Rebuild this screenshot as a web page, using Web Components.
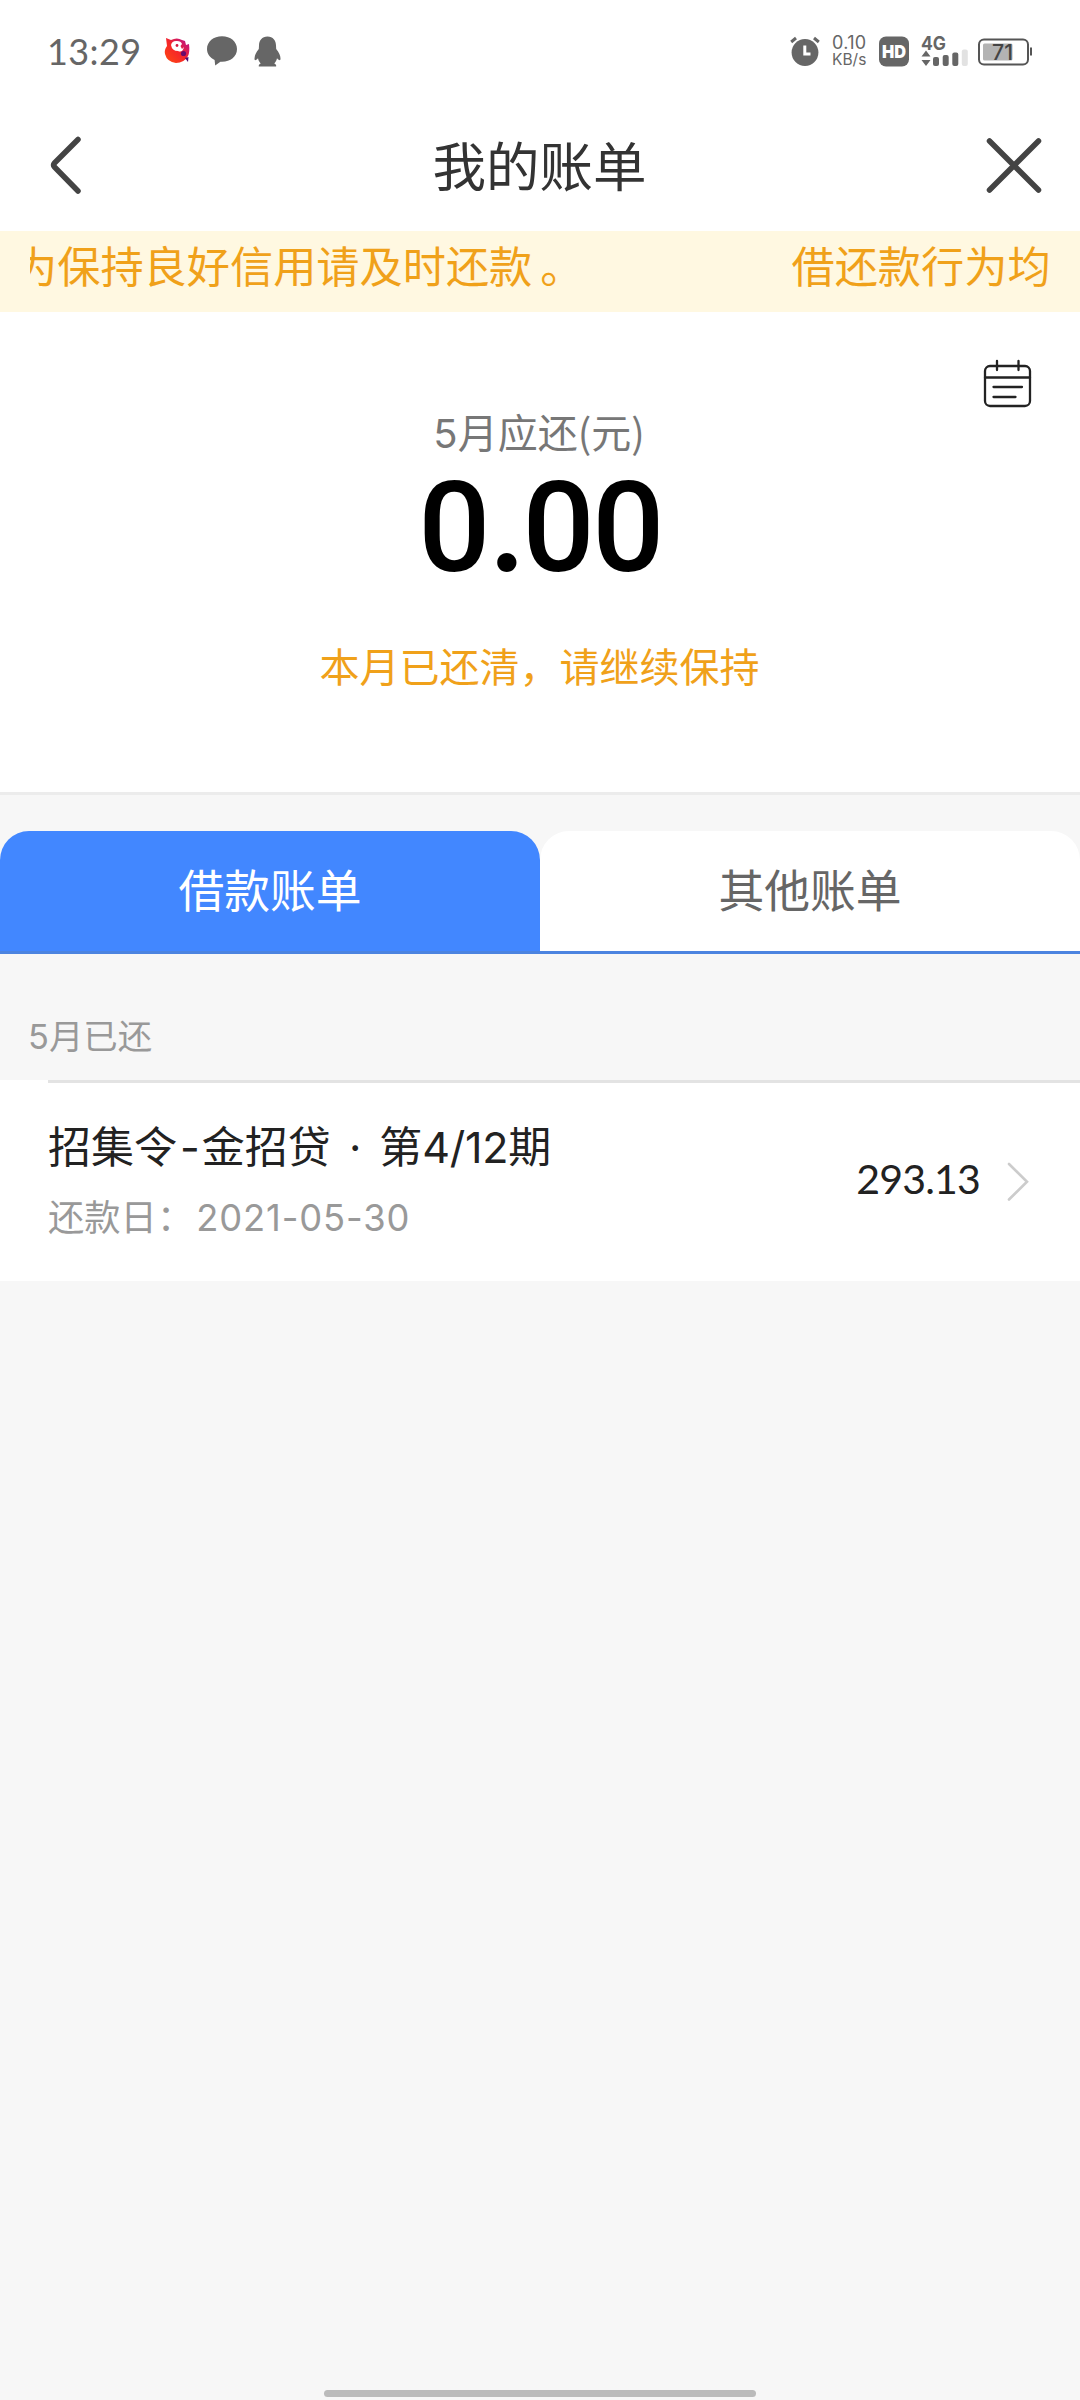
<!DOCTYPE html>
<html lang="zh-CN">
<head>
<meta charset="utf-8">
<title>我的账单</title>
<style>
    body {
        margin: 0;
        background: #f7f7f7;
        font-family: "Noto Sans CJK SC", sans-serif;
        color: #222;
    }
</style>
</head>
<body>
<bill-app></bill-app>

<script>
class StatusBar extends HTMLElement {
    connectedCallback() {
        this.attachShadow({ mode: 'open' });
        this.shadowRoot.innerHTML = `
            <style>
                :host {
                    display: flex;
                    justify-content: space-between;
                    height: 102px;
                    padding: 0 47px;
                    box-sizing: border-box;
                    color: #666;
                    font-family: Lato, sans-serif;
                }
                svg { display: block; }
                .side { display: flex; align-items: center; height: 102px; }
                .time { font-size: 36px; line-height: 40px; width: 117px; letter-spacing: 0.4px; white-space: nowrap; }
                .speed {
                    font-family: Inter, sans-serif;
                    width: 47px;
                    margin-left: 12px;
                    line-height: 17px;
                    white-space: nowrap;
                }
                .speed div:first-child { font-size: 18px; letter-spacing: 0.3px; }
                .speed div:last-child { font-size: 15.5px; }
                text { font-family: Inter, sans-serif; fill: #666; }
            </style>
            <div class="side">
                <span class="time">13:29</span>
                <svg width="27" height="28" viewBox="0 0 27 28">
                    <defs>
                        <linearGradient id="bird" x1="0" y1="1" x2="1" y2="0">
                            <stop offset="0" stop-color="#ff4a10"/>
                            <stop offset="0.5" stop-color="#f5262a"/>
                            <stop offset="1" stop-color="#b0109a"/>
                        </linearGradient>
                    </defs>
                    <path d="M2 1 L7 3 Q13 0 18 3 L21 4 L22 8 L25 7 Q26 15 24 19 Q20 26 12 26 Q3 25 1 17 Q0 13 3 9Z" fill="url(#bird)"/>
                    <path d="M7 8 Q8 3.500 13 4 Q17 4 18 7 L16.500 9 L18 12 L20 10 Q18.500 16 14 14 Q8 14 7 8Z" fill="#fff"/>
                    <circle cx="13" cy="8.500" r="1.400" fill="#d51a40"/>
                    <circle cx="19.500" cy="16.500" r="2.600" fill="#6b0a6b"/>
                    <path d="M21 21 L24.500 20 L24 25Z" fill="#500a70"/>
                </svg>
                <svg width="30" height="30" viewBox="0 0 30 30" style="margin-left:16px">
                    <path d="M15 0.3 C23.5 0.3 30 5.7 30 13 C30 20.5 23.5 25.8 15 25.8 L13.4 25.7 L8.2 29.6 L7.6 24 C3 21.8 0 17.8 0 13 C0 5.7 6.500 0.3 15 0.3Z" fill="#666"/>
                </svg>
                <svg width="27" height="31" viewBox="0 0 27 31" style="margin-left:17px">
                    <path d="M13.500 0.5 C8 0.5 5 4.5 5 9.500 L4.800 13 C2 16.500 0.500 19.500 0.500 22.500 C0.500 24.800 1.400 24.800 4 22.200 C4.500 24.500 5.500 26.300 6.800 27.400 C4.700 28 4.300 30.500 5.200 30.500 L21.800 30.500 C22.700 30.500 22.300 28 20.200 27.400 C21.500 26.300 22.500 24.500 23 22.200 C25.600 24.800 26.500 24.800 26.500 22.500 C26.500 19.500 25 16.500 22.200 13 L22 9.500 C22 4.500 19 0.5 13.500 0.5Z" fill="#666"/>
                </svg>
            </div>
            <div class="side">
                <svg width="30" height="30" viewBox="0 0 30 30">
                    <circle cx="15" cy="16.500" r="13.400" fill="#666"/>
                    <path d="M1.200 6 L6 2 M28.800 6 L24 2" stroke="#666" stroke-width="3" fill="none"/>
                    <path d="M14.800 9.500 V18 H20.500" stroke="#fff" stroke-width="3" fill="none"/>
                </svg>
                <div class="speed"><div>0.10</div><div>KB/s</div></div>
                <svg width="31" height="31" viewBox="0 0 31 31">
                    <rect x="0" y="0.500" width="30" height="30" rx="7" fill="#666"/>
                    <text x="3" y="22" font-size="18" font-weight="900" textLength="24" lengthAdjust="spacingAndGlyphs" style="fill:#fff">HD</text>
                </svg>
                <svg width="48" height="38" viewBox="0 -6 48 38" style="margin:-6px 0 0 11px">
                    <text x="0" y="14.500" font-size="18.500" font-weight="700" textLength="25" lengthAdjust="spacingAndGlyphs">4G</text>
                    <path d="M0.500 21.500 L5 15.500 L9.500 21.500Z M0.500 25 L5 31 L9.500 25Z" fill="#666"/>
                    <rect x="12" y="22" width="6" height="9" rx="2" fill="#666"/>
                    <rect x="21.700" y="20" width="6" height="11" rx="2" fill="#666"/>
                    <rect x="31.300" y="17.500" width="6" height="13.500" rx="2" fill="#666"/>
                    <rect x="40.800" y="14.500" width="6" height="16.500" rx="2" fill="#e2e2e2"/>
                </svg>
                <svg width="55" height="28" viewBox="0 0 55 28" style="margin:2px 0 0 9px">
                    <rect x="1" y="1.500" width="49" height="25" rx="5" fill="#fff" stroke="#555" stroke-width="2"/>
                    <rect x="5" y="5.500" width="29.500" height="17" rx="1.500" fill="#b3b3b3"/>
                    <rect x="52" y="9.500" width="2" height="8" fill="#555"/>
                    <text x="14" y="21.800" font-size="21" font-weight="500" textLength="21" lengthAdjust="spacingAndGlyphs" style="fill:#444">71</text>
                </svg>
            </div>
`;
    }
}

class NavHeader extends HTMLElement {
    connectedCallback() {
        this.attachShadow({ mode: 'open' });
        this.shadowRoot.innerHTML = `
            <style>
                :host {
                    display: flex;
                    align-items: center;
                    justify-content: space-between;
                    height: 129px;
                    padding: 0 36px 2px 47px;
                    box-sizing: border-box;
                }
                svg { display: block; fill: none; stroke: #444; stroke-width: 5.500; stroke-linecap: round; stroke-linejoin: round; }
                .title { font-size: 53.500px; line-height: 70px; color: #333; padding: 0 9px 3px 0; }
            </style>
            <svg width="57" height="60" viewBox="0 0 57 60"><path d="M31 3.500 L7.500 27 Q5.500 29 7.500 31 L31 55"/></svg>
            <div class="title"><slot></slot></div>
            <svg width="60" height="60" viewBox="0 0 60 60"><path d="M5.500 5 L54.500 54 M54.500 5 L5.500 54"/></svg>
`;
    }
}

class NoticeBar extends HTMLElement {
    connectedCallback() {
        this.attachShadow({ mode: 'open' });
        this.shadowRoot.innerHTML = `
            <style>
                :host {
                    display: block;
                    height: 81px;
                    padding: 0 30px;
                    box-sizing: border-box;
                    background: #fff8e1;
                }
                .track {
                    display: flex;
                    gap: 216px;
                    overflow: hidden;
                    font-size: 43.200px;
                    line-height: 67px;
                    color: #f0a11a;
                    white-space: nowrap;
                }
                /* the text has scrolled part of a character out on the left */
                ::slotted(span:first-child) { margin-left: -16px; }
            </style>
            <div class="track"><slot></slot></div>
`;
    }
}

class BillSummary extends HTMLElement {
    connectedCallback() {
        this.attachShadow({ mode: 'open' });
        this.shadowRoot.innerHTML = `
            <style>
                :host {
                    display: flex;
                    flex-direction: column;
                    align-items: center;
                    height: 483px;
                    box-sizing: border-box;
                    border-bottom: 3px solid #ececec;
                    background: #fff;
                }
                .calendar { align-self: flex-end; margin: 47px 48px 0 0; display: block; }
                .label { font-size: 40px; line-height: 50px; margin: -3px 2px 0 0; color: #777; }
                .amount {
                    font-family: Roboto, sans-serif;
                    font-weight: 500;
                    font-size: 127px;
                    line-height: 130px;
                    letter-spacing: -2.500px;
                    color: #000;
                    margin-top: -2px;
                }
                .dot { font-family: Lato, sans-serif; font-weight: 700; padding: 0 3px 0 4px; }
                .tip { font-size: 40px; line-height: 50px; margin: 47px 1px 0 0; color: #f0a11a; }
            </style>
            <svg class="calendar" width="49" height="50" viewBox="0 0 49 50" fill="none" stroke="#222" stroke-width="2.300" stroke-linecap="round">
                <rect x="2" y="7" width="45" height="40" rx="5"/>
                <path d="M2 18.500 H47 M14 2 V11 M35.500 2 V11 M10.500 28 H39 M10.500 38 H32.500"/>
            </svg>
            <div class="label"><slot name="label"></slot></div>
            <div class="amount">0<span class="dot">.</span>00</div>
            <div class="tip"><slot name="tip"></slot></div>
`;
    }
}

class BillTabs extends HTMLElement {
    connectedCallback() {
        this.attachShadow({ mode: 'open' });
        this.shadowRoot.innerHTML = `
            <style>
                :host {
                    display: grid;
                    grid-template-columns: 1fr 1fr;
                    height: 123px;
                    margin-top: 36px;
                }
                ::slotted(span) {
                    box-sizing: border-box;
                    height: 123px;
                    border-bottom: 3px solid #4c84e0;
                    border-radius: 29px 29px 0 0;
                    background: #fff;
                    color: #666;
                    font-size: 45.800px;
                    line-height: 114px;
                    text-align: center;
                }
                ::slotted(.active) {
                    background: #4287ff;
                    color: #fff;
                }
            </style>
            <slot></slot>
`;
    }
}

class BillItem extends HTMLElement {
    connectedCallback() {
        this.attachShadow({ mode: 'open' });
        this.shadowRoot.innerHTML = `
            <style>
                :host {
                    display: block;
                    height: 201px;
                    padding-left: 48px;
                    box-sizing: border-box;
                    background: #fff;
                }
                .row {
                    display: flex;
                    align-items: center;
                    justify-content: space-between;
                    height: 201px;
                    padding-right: 50px;
                    box-sizing: border-box;
                    border-top: 3px solid #e3e3e3;
                }
                .name { font-size: 43px; line-height: 60px; margin-top: -7px; color: #222; white-space: pre; }
                .date { font-size: 36.300px; line-height: 50px; margin-top: 13px; color: #999; white-space: nowrap; }
                .right { display: flex; align-items: center; }
                .amount {
                    font-family: Lato, sans-serif;
                    font-size: 41px;
                    line-height: 50px;
                    letter-spacing: -0.800px;
                    color: #222;
                    margin: -6px 26px 0 0;
                }
                svg { display: block; }
            </style>
            <div class="row">
                <div>
                    <div class="name"><slot name="name"></slot></div>
                    <div class="date"><slot name="date"></slot></div>
                </div>
                <div class="right">
                    <div class="amount"><slot name="amount"></slot></div>
                    <svg width="24" height="40" viewBox="0 0 24 40"><path d="M3 2 L21 19.800 L3 37.500" fill="none" stroke="#ccc" stroke-width="2.600" stroke-linecap="round"/></svg>
                </div>
            </div>
`;
    }
}

class BillApp extends HTMLElement {
    connectedCallback() {
        this.attachShadow({ mode: 'open' });
        this.shadowRoot.innerHTML = `
            <style>
                :host {
                    display: flex;
                    flex-direction: column;
                    width: 1080px;
                    height: 2400px;
                    overflow: hidden;
                    background: #f7f7f7;
                }
                .top { background: #fff; }
                .section {
                    height: 126px;
                    padding: 55px 0 0 28px;
                    box-sizing: border-box;
                    font-size: 34.400px;
                    line-height: 50px;
                    color: #999;
                }
                .num { font-family: Inter, sans-serif; }
                .hyphen { padding: 0 2px 0 3px; }
                .point { padding: 0 6px; }
                .term { letter-spacing: -0.300px; }
                .day { letter-spacing: 0.900px; padding-left: 3px; }
                .stop { padding-left: 8px; margin-right: -8px; }
                .home {
                    width: 432px;
                    height: 7px;
                    border-radius: 4px;
                    background: #bbb;
                    margin: auto auto 3px;
                }
            </style>
            <div class="top">
                <status-bar></status-bar>
                <nav-header>我的账单</nav-header>
            </div>
            <notice-bar><span>为保持良好信用请及时还款<span class="stop">。</span></span><span>借还款行为均</span></notice-bar>
            <bill-summary>
                <span slot="label"><span class="num">5</span>月应还(元)</span>
                <span slot="tip">本月已还清，请继续保持</span>
            </bill-summary>
            <bill-tabs><span class="active">借款账单</span><span>其他账单</span></bill-tabs>
            <div class="section"><span class="num">5</span>月已还</div>
            <bill-item>
                <span slot="name">招集令<span class="num hyphen">-</span>金招贷<span class="num point"> · </span>第<span class="num term">4/12</span>期</span>
                <span slot="date">还款日：<span class="num day">2021-05-30</span></span>
                <span slot="amount">293.13</span>
            </bill-item>
            <div class="home"></div>
`;
    }
}

customElements.define('status-bar', StatusBar);
customElements.define('nav-header', NavHeader);
customElements.define('notice-bar', NoticeBar);
customElements.define('bill-summary', BillSummary);
customElements.define('bill-tabs', BillTabs);
customElements.define('bill-item', BillItem);
customElements.define('bill-app', BillApp);
</script>
</body>
</html>
